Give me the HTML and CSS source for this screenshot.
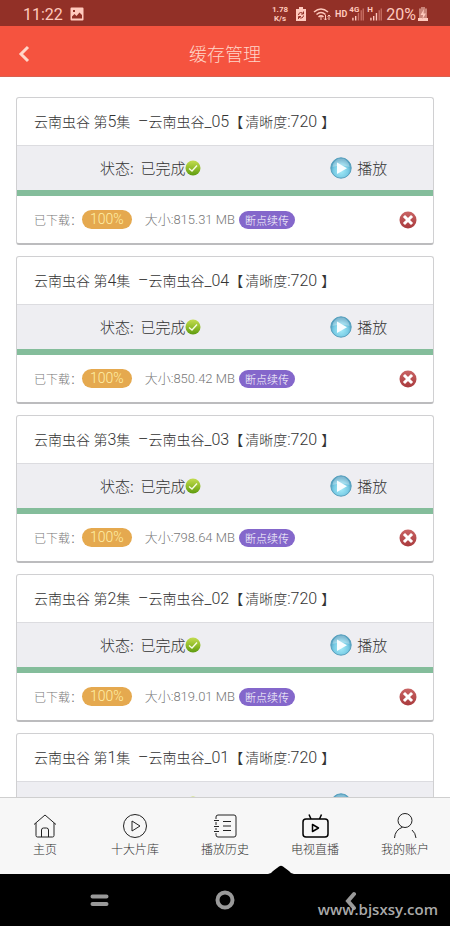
FILE: index.html
```html
<!DOCTYPE html>
<html lang="zh-CN">
<head>
<meta charset="utf-8">
<meta name="viewport" content="width=device-width, initial-scale=1">
<title>缓存管理</title>
<link rel="stylesheet" href="styles.css">
</head>
<body>
<svg class="defs" aria-hidden="true">
  <defs>
    <linearGradient id="green" x1="0" y1="0" x2="0" y2="1"><stop offset="0" stop-color="#c3dc50"/><stop offset=".5" stop-color="#94bf2c"/><stop offset="1" stop-color="#5d9a10"/></linearGradient>
    <radialGradient id="blue" cx=".5" cy=".65" r=".55"><stop offset="0" stop-color="#a5ebf8"/><stop offset=".65" stop-color="#79cce5"/><stop offset="1" stop-color="#4b9dbf"/></radialGradient>
    <linearGradient id="red" x1="0" y1="0" x2="0" y2="1"><stop offset="0" stop-color="#c96464"/><stop offset="1" stop-color="#a93a3d"/></linearGradient>
    <symbol id="done" viewBox="0 0 16 16"><circle cx="8" cy="8" r="7.5" fill="url(#green)"/><path d="M4 8.500l3 2.500 5-5.500" fill="none" stroke="#f7fbe6" stroke-width="1.400"/></symbol>
    <symbol id="play" viewBox="0 0 22 22"><circle cx="11" cy="11" r="10.200" fill="url(#blue)" stroke="#579fbd" stroke-width="1"/><path d="M2.500 10a8.500 8.500 0 0 1 17 0q-8-3-17 0z" fill="#fff" opacity=".3"/><path d="M7 5.500v11.500l10-5.700z" fill="#f8fdff"/></symbol>
    <symbol id="remove" viewBox="0 0 18 18"><circle cx="9" cy="9" r="8.500" fill="url(#red)"/><path d="M6 6l6 6m0-6l-6 6" stroke="#fff" stroke-width="3" stroke-linecap="square"/></symbol>
  </defs>
</svg>
<div class="app">
  <div class="status">
    <span class="clock">11:22</span>
    <svg class="photo" viewBox="0 0 14 14"><path fill-rule="evenodd" d="M1.500.500h11a1 1 0 0 1 1 1v11a1 1 0 0 1-1 1h-11a1 1 0 0 1-1-1v-11a1 1 0 0 1 1-1zM2 11.500h10V8L9.500 5.500 6.500 9 4.500 7 2 9.500zM3 3v2h2V3z" fill="currentColor"/></svg>
    <span class="speed">1.78<br>K/s</span>
    <svg class="recycle" viewBox="0 0 10 14"><path d="M3 0h4v2h3v12H0V2h3z" fill="currentColor"/><path d="M2.500 8a2.500 2.500 0 0 1 4.500-1.500M7.500 8.500a2.500 2.500 0 0 1-4.500 1.500M7.500 4.500v2.500H5M2.500 12V9.500H5" fill="none" stroke="#923027"/></svg>
    <svg class="wifi" viewBox="0 0 18 14"><path d="M1 5q7-6 14 0M3.500 7.500q4.500-4 9 0M5.500 10q2.500-2.200 5 0" fill="none" stroke="currentColor" stroke-width="1.500"/><path d="M8 10v3M12.500 8v5m-1.500-1.500l1.500 1.500 1.500-1.500M16 13V8m-1.500 1.500L16 8l1.500 1.500" fill="none" stroke="currentColor"/></svg>
    <span class="hd">HD</span>
    <span class="signal"><small>4G</small><svg viewBox="0 0 13 13"><path d="M1 13v-3M4 13V8" stroke="currentColor" stroke-width="1.500"/><path d="M7 13V5M10 13V2M12.200 13V0" stroke="#c66d62" stroke-width="1.500"/></svg></span>
    <span class="signal"><small>H</small><svg viewBox="0 0 13 13"><path d="M1 13v-3M4 13V8M7 13V5" stroke="currentColor" stroke-width="1.500"/><path d="M10 13V2M12.200 13V0" stroke="#c66d62" stroke-width="1.500"/></svg></span>
    <span class="percent">20%</span>
    <svg class="battery" viewBox="0 0 10 14"><path d="M3 0h4v1.500h2V14H1V1.500h2z" fill="#c98378"/><path d="M0 11h10v3H0zM6 2L2.500 8H5l-.5 4L8 6.500H5.500z" fill="currentColor"/></svg>
  </div>
  <header class="header">
    <button class="back" aria-label="返回"><svg viewBox="0 0 12 18"><path d="M10 2L3 9l7 7" fill="none" stroke="currentColor" stroke-width="3"/></svg></button>
    <h1>缓存管理</h1>
  </header>
  <main class="list">
    <article class="card">
      <h2>云南虫谷 第<span>5</span>集<span>&nbsp; –</span>云南虫谷<span>_05</span>【<em>清晰度<span>:720</span></em>】</h2>
      <div class="state"><span class="cell">状态: &nbsp;已完成<svg class="done"><use href="#done"/></svg></span><button class="cell play"><svg><use href="#play"/></svg>播放</button></div>
      <div class="bar"></div>
      <div class="info"><span class="label">已下载：</span><b class="pct">100%</b><span class="size">大小:815.31 MB</span><button class="resume">断点续传</button><button class="remove" aria-label="删除"><svg><use href="#remove"/></svg></button></div>
    </article>
    <article class="card">
      <h2>云南虫谷 第<span>4</span>集<span>&nbsp; –</span>云南虫谷<span>_04</span>【<em>清晰度<span>:720</span></em>】</h2>
      <div class="state"><span class="cell">状态: &nbsp;已完成<svg class="done"><use href="#done"/></svg></span><button class="cell play"><svg><use href="#play"/></svg>播放</button></div>
      <div class="bar"></div>
      <div class="info"><span class="label">已下载：</span><b class="pct">100%</b><span class="size">大小:850.42 MB</span><button class="resume">断点续传</button><button class="remove" aria-label="删除"><svg><use href="#remove"/></svg></button></div>
    </article>
    <article class="card">
      <h2>云南虫谷 第<span>3</span>集<span>&nbsp; –</span>云南虫谷<span>_03</span>【<em>清晰度<span>:720</span></em>】</h2>
      <div class="state"><span class="cell">状态: &nbsp;已完成<svg class="done"><use href="#done"/></svg></span><button class="cell play"><svg><use href="#play"/></svg>播放</button></div>
      <div class="bar"></div>
      <div class="info"><span class="label">已下载：</span><b class="pct">100%</b><span class="size">大小:798.64 MB</span><button class="resume">断点续传</button><button class="remove" aria-label="删除"><svg><use href="#remove"/></svg></button></div>
    </article>
    <article class="card">
      <h2>云南虫谷 第<span>2</span>集<span>&nbsp; –</span>云南虫谷<span>_02</span>【<em>清晰度<span>:720</span></em>】</h2>
      <div class="state"><span class="cell">状态: &nbsp;已完成<svg class="done"><use href="#done"/></svg></span><button class="cell play"><svg><use href="#play"/></svg>播放</button></div>
      <div class="bar"></div>
      <div class="info"><span class="label">已下载：</span><b class="pct">100%</b><span class="size">大小:819.01 MB</span><button class="resume">断点续传</button><button class="remove" aria-label="删除"><svg><use href="#remove"/></svg></button></div>
    </article>
    <article class="card">
      <h2>云南虫谷 第<span>1</span>集<span>&nbsp; –</span>云南虫谷<span>_01</span>【<em>清晰度<span>:720</span></em>】</h2>
      <div class="state"><span class="cell">状态: &nbsp;已完成<svg class="done"><use href="#done"/></svg></span><button class="cell play"><svg><use href="#play"/></svg>播放</button></div>
      <div class="bar"></div>
    </article>
  </main>
  <nav class="tabs">
    <a href="#home"><svg viewBox="0 0 28 28"><path d="M3 12.500L14 3l11 9.500M5 11v12.500q0 1.500 1.500 1.500h15q1.500 0 1.500-1.500V11M10.500 25v-7q0-2 2-2h3q2 0 2 2v7"/></svg>主页</a>
    <a href="#library"><svg viewBox="0 0 28 28"><circle cx="14" cy="14" r="11.500"/><path d="M11 9v10l8-5z"/></svg>十大片库</a>
    <a href="#history"><svg viewBox="0 0 28 28"><path d="M5 7V5q0-2 2-2h16q2 0 2 2v18q0 2-2 2H7q-2 0-2-2v-2M5 10v3M5 16v2M3 8.500h5M3 14.500h5M3 19.500h5M12 9.500h8M12 14h8M12 18.500h8"/></svg>播放历史</a>
    <a href="#live"><svg class="bold" viewBox="0 0 28 28"><rect x="2" y="7" width="25" height="18" rx="3"/><path d="M8 2.500L10 7M20.500 2.500L18.500 7M11.500 12.500v7l6-3.500z"/></svg>电视直播</a>
    <a href="#account"><svg viewBox="0 0 28 28"><circle cx="14" cy="8.500" r="7"/><path d="M3.500 26q.5-8 8-10.800M21 18q3.500 3 4 8"/></svg>我的账户</a>
  </nav>
  <footer class="system">
    <svg class="notch" viewBox="0 0 26 9"><path d="M0 9Q3 9 5 6L11 1.500Q13 0 15 1.500L21 6Q23 9 26 9z"/></svg>
    <button aria-label="最近任务"><svg viewBox="0 0 20 20"><path d="M2.500 6.500h14M2.500 14h14"/></svg></button>
    <button aria-label="主屏幕"><svg viewBox="0 0 20 20"><circle cx="10" cy="10" r="7.500"/></svg></button>
    <button aria-label="返回上一页"><svg viewBox="0 0 20 20"><path d="M13 4l-6 7 6 7"/></svg></button>
    <span class="site">www.bjsxsy.com</span>
  </footer>
</div>
</body>
</html>
```
FILE: styles.css
```css
* { box-sizing: border-box; }
body { margin: 0; background: #fff; color: #333; font-family: Roboto, "Noto Sans CJK SC", sans-serif; font-weight: 300; }
button { padding: 0; border: 0; background: none; color: inherit; font: inherit; }
svg { display: block; flex: none; }
.defs { position: absolute; width: 0; height: 0; }
.app { display: flex; flex-direction: column; height: 100vh; }

.status { display: flex; align-items: center; height: 26px; flex: none; padding: 2px 22px 0 23px; background: #923027; color: #ffc9bd; font-weight: 400; }
.clock { font-size: 16px; }
.photo { width: 14px; height: 14px; margin-left: 7px; }
.speed { margin-left: auto; font-size: 8px; line-height: 9px; font-weight: 700; text-align: center; }
.recycle { width: 10px; height: 14px; margin-left: 8px; }
.wifi { width: 18px; height: 14px; margin-left: 7px; }
.hd { margin: 0 2px 0 4px; font-size: 9px; font-weight: 700; }
.signal { position: relative; width: 15px; margin-right: 3px; }
.signal small { position: absolute; left: 0; top: -2px; font-size: 8px; line-height: 8px; font-weight: 700; }
.signal svg { width: 12px; height: 13px; margin-left: 3px; }
.percent { margin-left: 1px; font-size: 16px; }
.battery { width: 10px; height: 14px; margin-left: 2px; }

.header { display: grid; grid-template-columns: 48px 1fr 48px; align-items: center; height: 51px; flex: none; padding-top: 2px; border-bottom: 1px solid #d9604f; background: #f5533f; color: #ffd6c9; }
.header h1 { margin: 0; padding-top: 5px; font-size: 18px; line-height: 26px; font-weight: 300; text-align: center; }
.back { height: 48px; padding: 4px 0 0 18px; }
.back svg { width: 12px; height: 18px; }

.list { flex: 1; min-height: 0; overflow: hidden; padding: 20px 16px 0; }
.card { min-height: 148px; margin-bottom: 11px; border: 1px solid #d0d0d2; border-bottom: 2px solid #bcbcbe; border-radius: 3px; background: #fff; }
.card h2 { margin: 0; padding: 0 17px; height: 48px; border-bottom: 1px solid #dcdce0; font-size: 14px; line-height: 48px; font-weight: 300; white-space: nowrap; }
.card h2 span { font-size: 16px; }
.card h2 em { padding: 0 4px 0 2px; font-style: normal; }
.state { display: grid; grid-template-columns: 9fr 5fr; height: 44px; background: #eeeef2; font-size: 15px; }
.cell { display: flex; align-items: center; justify-content: center; font-family: "Noto Sans CJK SC", sans-serif; line-height: 20px; }
.done { width: 16px; height: 16px; }
.play { gap: 5px; }
.play svg { width: 22px; height: 22px; }
.bar { height: 6px; background: #84bd9b; }
.info { display: flex; align-items: center; height: 47px; padding: 0 16px 0 17px; color: #777; font-size: 12px; }
.label, .resume { font-family: "Noto Sans CJK SC", sans-serif; }
.label { line-height: 20px; }
.pct { padding: 0 8px; border-radius: 10px; background: #e5a94f; color: #fff0a8; font-size: 14px; line-height: 19px; font-weight: 300; }
.size { margin: 0 4px 0 13px; font-size: 13px; line-height: 20px; }
.resume { padding: 0 6px; border-radius: 9px; background: #8467cb; color: #fff; font-size: 11px; line-height: 18px; }
.remove { margin-left: auto; }
.remove svg { width: 18px; height: 18px; }

.tabs { display: grid; grid-template-columns: repeat(5, 1fr); height: 77px; flex: none; padding-top: 14px; border-top: 1px solid #cfcfcf; background: #f7f7f7; }
.tabs a { display: flex; flex-direction: column; align-items: center; color: #333; font-size: 12px; line-height: 20px; text-decoration: none; }
.tabs svg { width: 28px; height: 28px; fill: none; stroke: #222; stroke-width: 1; stroke-linejoin: round; }
.tabs .bold { stroke: #000; stroke-width: 1.5; }

.system { position: relative; display: grid; grid-template-columns: 1fr 52px 1fr; justify-items: center; align-items: center; height: 52px; flex: none; background: #000; }
.system button svg { width: 20px; height: 20px; fill: none; stroke: #999; stroke-width: 4; stroke-linecap: round; }
.notch { position: absolute; left: 59%; bottom: 100%; width: 30px; height: 9px; }
.site { position: absolute; right: 12px; bottom: 5px; color: #aaa; font-family: "Open Sans", sans-serif; font-size: 15px; line-height: 24px; font-weight: 600; }
```
